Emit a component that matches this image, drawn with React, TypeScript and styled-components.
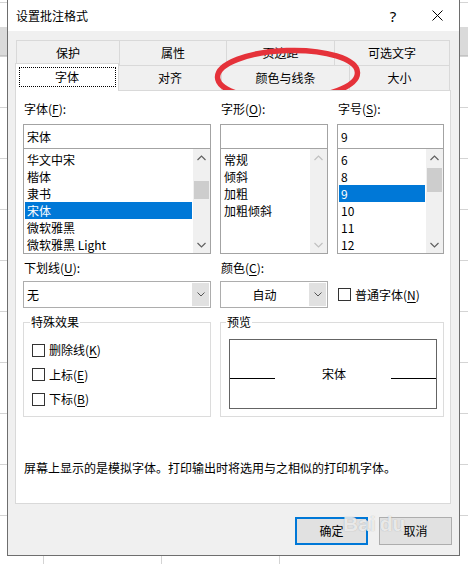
import React from 'react';
import styled, { createGlobalStyle } from 'styled-components';

const GlobalStyle = createGlobalStyle`
  html, body {
    margin: 0;
    padding: 0;
  }
  body {
    font-family: "Noto Sans CJK SC", "Noto Sans", sans-serif;
    font-size: 12px;
    color: #000;
  }
`;

const Page = styled.div`
  position: relative;
  width: 468px;
  height: 564px;
  overflow: hidden;
  background-color: #fff;
  background-image:
    linear-gradient(to bottom, transparent 27px, #dadada 27px, #dadada 55px, #c4c4c4 55px, #c4c4c4 56px, transparent 56px),
    repeating-linear-gradient(to bottom, transparent 0, transparent 50px, #d4d4d4 50px, #d4d4d4 51px),
    repeating-linear-gradient(to right, transparent 0, transparent 117px, #d4d4d4 117px, #d4d4d4 118px);
  background-position: 0 0, 0 6px, -74px 0;
`;

const Dialog = styled.div`
  margin-left: 7px;
  width: 453px;
  height: 556px;
  box-sizing: border-box;
  border: 1px solid #6e6e6e;
  border-top: none;
  background: #f0f0f0;
  display: flex;
  flex-direction: column;
`;

const TitleBar = styled.div`
  height: 31px;
  flex-shrink: 0;
  background: #fff;
  display: flex;
  align-items: center;
  padding-left: 8px;
`;

const Title = styled.span`
  font-size: 12px;
  line-height: 16px;
`;

const TitleButton = styled.div<{ $w: number }>`
  width: ${({ $w }) => $w}px;
  height: 31px;
  display: flex;
  align-items: center;
  justify-content: center;
  font-family: "Noto Sans", "DejaVu Sans", sans-serif;
  font-size: 15px;
  &:first-of-type {
    margin-left: auto;
  }
`;

const Body = styled.div`
  flex: 1;
  display: flex;
  flex-direction: column;
  padding: 9px 8px 0 7px;
`;

const TabRow = styled.div<{ $indent: number }>`
  display: flex;
  height: 25px;
  padding-left: ${({ $indent }) => $indent}px;
`;

const Tab = styled.div<{ $w: number; $active?: boolean }>`
  position: relative;
  box-sizing: border-box;
  width: ${({ $w }) => $w}px;
  height: ${({ $active }) => ($active ? 28 : 25)}px;
  margin-top: ${({ $active }) => ($active ? -2 : 0)}px;
  z-index: ${({ $active }) => ($active ? 2 : 0)};
  background: ${({ $active }) => ($active ? '#fff' : '#f0f0f0')};
  border-top: 1px solid #d9d9d9;
  border-right: 1px solid #d9d9d9;
  border-left: ${({ $active }) => ($active ? '1px solid #d9d9d9' : 'none')};
  display: flex;
  align-items: center;
  justify-content: center;
  line-height: 16px;
  padding-bottom: ${({ $active }) => ($active ? 2 : 0)}px;
  &:first-child {
    border-left: 1px solid #d9d9d9;
  }
`;

const FocusRect = styled.div`
  width: 97px;
  height: 20px;
  box-sizing: border-box;
  border: 1px dotted #000;
  display: flex;
  align-items: center;
  justify-content: center;
`;

const Panel = styled.div`
  position: relative;
  z-index: 1;
  height: 414px;
  box-sizing: border-box;
  background: #fff;
  border: 1px solid #d9d9d9;
  padding: 10px 0 0 7px;
  display: flex;
  flex-direction: column;
`;

const FieldGrid = styled.div<{ $top?: number }>`
  display: grid;
  grid-template-columns: 188px 108px 107px;
  column-gap: 9px;
  margin-top: ${({ $top }) => $top ?? 0}px;
`;

const Column = styled.div`
  display: flex;
  flex-direction: column;
`;

const Label = styled.div<{ $gap: number }>`
  line-height: 16px;
  height: 16px;
  padding-left: 1px;
  margin-bottom: ${({ $gap }) => $gap}px;
  white-space: nowrap;
`;

const TextBox = styled.div`
  height: 25px;
  box-sizing: border-box;
  border: 1px solid #a3a3a3;
  padding-left: 3px;
  line-height: 23px;
`;

const ListBox = styled.div`
  height: 105px;
  box-sizing: border-box;
  border: 1px solid #a3a3a3;
  border-top: none;
  display: flex;
  overflow: hidden;
`;

const Items = styled.div`
  flex: 1;
  padding: 2px 1px 0;
  min-width: 0;
`;

const Item = styled.div<{ $selected?: boolean }>`
  height: 17px;
  line-height: 17px;
  padding-left: 2px;
  white-space: nowrap;
  background: ${({ $selected }) => ($selected ? '#0078d7' : 'transparent')};
  color: ${({ $selected }) => ($selected ? '#fff' : '#000')};
`;

const ScrollBar = styled.div`
  width: 17px;
  flex-shrink: 0;
  background: #f0f0f0;
  display: flex;
  flex-direction: column;
`;

const ScrollArrow = styled.div`
  height: 17px;
  display: flex;
  align-items: center;
  justify-content: center;
`;

const Track = styled.div`
  flex: 1;
  padding: 0 1px;
`;

const Thumb = styled.div<{ $offset: number; $size: number }>`
  margin-top: ${({ $offset }) => $offset}px;
  height: ${({ $size }) => $size}px;
  background: #cdcdcd;
`;

const Combo = styled.div`
  height: 27px;
  box-sizing: border-box;
  border: 1px solid #adadad;
  display: flex;
  background: #fff;
`;

const ComboText = styled.div<{ $center?: boolean }>`
  flex: 1;
  line-height: 25px;
  padding-left: ${({ $center }) => ($center ? 0 : 3)}px;
  text-align: ${({ $center }) => ($center ? 'center' : 'left')};
`;

const ComboButton = styled.div`
  width: 17px;
  margin: 1px;
  background: #e1e1e1;
  display: flex;
  align-items: center;
  justify-content: center;
`;

const CheckRow = styled.label`
  display: flex;
  align-items: center;
  gap: 4px;
  height: 16px;
  line-height: 16px;
  white-space: nowrap;
`;

const CheckBox = styled.span`
  width: 13px;
  height: 13px;
  box-sizing: border-box;
  border: 1px solid #333;
  background: #fff;
  flex-shrink: 0;
`;

const ComboSide = styled.div`
  height: 27px;
  display: flex;
  align-items: center;
  padding-left: 1px;
`;

const Group = styled.fieldset<{ $span?: boolean }>`
  grid-column: ${({ $span }) => ($span ? '2 / 4' : 'auto')};
  margin: 6px 0 0;
  height: 103px;
  box-sizing: border-box;
  border: 1px solid #dcdcdc;
  padding: 0;
  min-width: 0;
`;

const Legend = styled.legend<{ $indent: number }>`
  margin-left: ${({ $indent }) => $indent}px;
  padding: 0 1px;
  line-height: 16px;
`;

const CheckList = styled.div`
  display: flex;
  flex-direction: column;
  gap: 8.5px;
  padding: 12px 0 0 8px;
`;

const PreviewWrap = styled.div`
  padding: 9px 6px 0 8px;
`;

const PreviewBox = styled.div`
  height: 70px;
  box-sizing: border-box;
  border: 1px solid #646464;
  display: flex;
  align-items: center;
`;

const BaseLine = styled.div`
  width: 45px;
  height: 1px;
  background: #000;
  margin-top: 8px;
`;

const PreviewText = styled.div`
  flex: 1;
  text-align: center;
  line-height: 16px;
  padding-left: 2px;
`;

const Note = styled.div`
  margin-top: 43px;
  padding-left: 1px;
  line-height: 16px;
  white-space: nowrap;
`;

const ButtonRow = styled.div`
  display: flex;
  justify-content: flex-end;
  gap: 11px;
  margin: 13px -1px 0 0;
`;

const Button = styled.div<{ $default?: boolean }>`
  width: 73px;
  height: 28px;
  box-sizing: border-box;
  background: #e1e1e1;
  border: ${({ $default }) => ($default ? '2px solid #0078d7' : '1px solid #adadad')};
  display: flex;
  align-items: center;
  justify-content: center;
  line-height: 16px;
`;

const Watermark = styled.div`
  position: absolute;
  left: 343px;
  top: 512px;
  display: flex;
  align-items: center;
  gap: 4px;
  font-family: "Liberation Sans", Arial, sans-serif;
  font-size: 21px;
  font-weight: 700;
  color: rgba(255, 255, 255, 0.75);
  text-shadow: 0 0 1px rgba(120, 120, 120, 0.6);
  pointer-events: none;
`;

const Circle = styled.svg`
  position: absolute;
  left: 210px;
  top: 44px;
  overflow: visible;
  pointer-events: none;
`;

const Chevron = ({ up, light }: { up?: boolean; light?: boolean }) => (
  <svg width="9" height="6" viewBox="0 0 9 6">
    <path
      d={up ? 'M0.5 5 L4.5 1 L8.5 5' : 'M0.5 1 L4.5 5 L8.5 1'}
      fill="none"
      stroke={light ? '#c0c0c0' : '#606060'}
      strokeWidth="1.2"
    />
  </svg>
);

const SmallChevron = () => (
  <svg width="8" height="5" viewBox="0 0 8 5">
    <path d="M0.5 0.5 L4 4 L7.5 0.5" fill="none" stroke="#555" strokeWidth="1" />
  </svg>
);

const U = styled.u`
  text-underline-offset: 2px;
`;

type ListProps = {
  items: string[];
  selected?: number;
  thumb?: { offset: number; size: number };
};

const FontList = ({ items, selected, thumb }: ListProps) => (
  <ListBox>
    <Items>
      {items.map((it, i) => (
        <Item key={it} $selected={i === selected}>
          {it}
        </Item>
      ))}
    </Items>
    <ScrollBar>
      <ScrollArrow>
        <Chevron up light={!thumb} />
      </ScrollArrow>
      <Track>{thumb && <Thumb $offset={thumb.offset} $size={thumb.size} />}</Track>
      <ScrollArrow>
        <Chevron light={!thumb} />
      </ScrollArrow>
    </ScrollBar>
  </ListBox>
);

const Check = ({ text, accel }: { text: string; accel: string }) => (
  <CheckRow>
    <CheckBox />
    <span>
      {text}(<U>{accel}</U>)
    </span>
  </CheckRow>
);

const backTabs = [
  { label: '保护', w: 104 },
  { label: '属性', w: 107 },
  { label: '页边距', w: 108 },
  { label: '可选文字', w: 115 },
];

const frontTabs = [
  { label: '对齐', w: 103 },
  { label: '颜色与线条', w: 128 },
  { label: '大小', w: 100 },
];

export default function App() {
  return (
    <Page>
      <GlobalStyle />
      <Dialog>
        <TitleBar>
          <Title>设置批注格式</Title>
          <TitleButton $w={46}>?</TitleButton>
          <TitleButton $w={43}>
            <svg width="11" height="11" viewBox="0 0 11 11">
              <path d="M0.5 0.5 L10.5 10.5 M10.5 0.5 L0.5 10.5" stroke="#000" strokeWidth="1" />
            </svg>
          </TitleButton>
        </TitleBar>

        <Body>
          <TabRow $indent={1}>
            {backTabs.map((t) => (
              <Tab key={t.label} $w={t.w}>
                {t.label}
              </Tab>
            ))}
          </TabRow>
          <TabRow $indent={0}>
            <Tab $w={104} $active>
              <FocusRect>字体</FocusRect>
            </Tab>
            {frontTabs.map((t) => (
              <Tab key={t.label} $w={t.w}>
                {t.label}
              </Tab>
            ))}
          </TabRow>

          <Panel>
            <FieldGrid>
              <Column>
                <Label $gap={7}>
                  字体(<U>F</U>):
                </Label>
                <TextBox>宋体</TextBox>
                <FontList
                  items={['华文中宋', '楷体', '隶书', '宋体', '微软雅黑', '微软雅黑 Light']}
                  selected={3}
                  thumb={{ offset: 15, size: 18 }}
                />
              </Column>
              <Column>
                <Label $gap={7}>
                  字形(<U>O</U>):
                </Label>
                <TextBox />
                <FontList items={['常规', '倾斜', '加粗', '加粗倾斜']} />
              </Column>
              <Column>
                <Label $gap={7}>
                  字号(<U>S</U>):
                </Label>
                <TextBox>9</TextBox>
                <FontList
                  items={['6', '8', '9', '10', '11', '12']}
                  selected={2}
                  thumb={{ offset: 2, size: 24 }}
                />
              </Column>
            </FieldGrid>

            <FieldGrid $top={6}>
              <Column>
                <Label $gap={5}>
                  下划线(<U>U</U>):
                </Label>
                <Combo>
                  <ComboText>无</ComboText>
                  <ComboButton>
                    <SmallChevron />
                  </ComboButton>
                </Combo>
              </Column>
              <Column>
                <Label $gap={5}>
                  颜色(<U>C</U>):
                </Label>
                <Combo>
                  <ComboText $center>自动</ComboText>
                  <ComboButton>
                    <SmallChevron />
                  </ComboButton>
                </Combo>
              </Column>
              <Column>
                <Label $gap={5} />
                <ComboSide>
                  <Check text="普通字体" accel="N" />
                </ComboSide>
              </Column>

              <Group>
                <Legend $indent={6}>特殊效果</Legend>
                <CheckList>
                  <Check text="删除线" accel="K" />
                  <Check text="上标" accel="E" />
                  <Check text="下标" accel="B" />
                </CheckList>
              </Group>
              <Group $span>
                <Legend $indent={5}>预览</Legend>
                <PreviewWrap>
                  <PreviewBox>
                    <BaseLine />
                    <PreviewText>宋体</PreviewText>
                    <BaseLine />
                  </PreviewBox>
                </PreviewWrap>
              </Group>
            </FieldGrid>

            <Note>屏幕上显示的是模拟字体。打印输出时将选用与之相似的打印机字体。</Note>
          </Panel>

          <ButtonRow>
            <Button $default>确定</Button>
            <Button>取消</Button>
          </ButtonRow>
        </Body>
      </Dialog>

      <Circle width="156" height="64" viewBox="0 0 156 64">
        <ellipse
          cx="77.5"
          cy="31"
          rx="70"
          ry="24.5"
          fill="none"
          stroke="#e5323a"
          strokeWidth="5.5"
          transform="rotate(-2 77.5 31)"
        />
      </Circle>

      <Watermark>
        <span>Bai</span>
        <span>du</span>
      </Watermark>
    </Page>
  );
}
